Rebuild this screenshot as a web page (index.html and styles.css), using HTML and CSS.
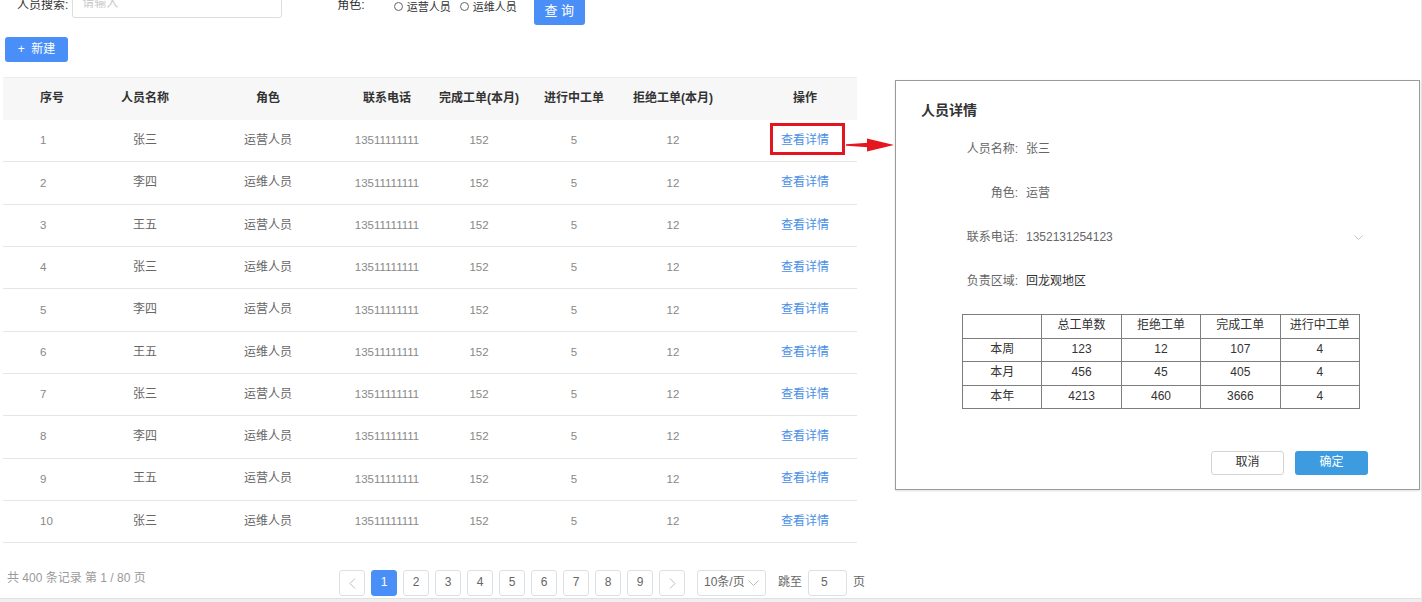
FILE: index.html
```html
<!DOCTYPE html>
<html lang="zh-CN">
<head>
<meta charset="utf-8">
<title>人员管理</title>
<link rel="stylesheet" href="styles.css">
</head>
<body>
<div class="page">
  <div class="search">
    <span class="search-label">人员搜索:</span>
    <div class="search-input">请输入</div>
    <span class="role-label">角色:</span>
    <label class="radio radio-first"><i></i>运营人员</label>
    <label class="radio radio-next"><i></i>运维人员</label>
    <div class="btn-query">查 询</div>
  </div>
  <div class="btn-new">+&nbsp;&nbsp;新建</div>

  <div class="main">
    <div class="left">
      <div class="table">
        <div class="thead">
          <div class="cell c1">序号</div>
          <div class="cell">人员名称</div>
          <div class="cell">角色</div>
          <div class="cell">联系电话</div>
          <div class="cell">完成工单(本月)</div>
          <div class="cell">进行中工单</div>
          <div class="cell">拒绝工单(本月)</div>
          <div class="cell c8">操作</div>
        </div>
        <div class="row"><div class="cell c1 num">1</div><div class="cell">张三</div><div class="cell">运营人员</div><div class="cell num">13511111111</div><div class="cell num">152</div><div class="cell num">5</div><div class="cell num">12</div><div class="cell c8"><a class="link">查看详情</a></div></div>
        <div class="row"><div class="cell c1 num">2</div><div class="cell">李四</div><div class="cell">运维人员</div><div class="cell num">13511111111</div><div class="cell num">152</div><div class="cell num">5</div><div class="cell num">12</div><div class="cell c8"><a class="link">查看详情</a></div></div>
        <div class="row"><div class="cell c1 num">3</div><div class="cell">王五</div><div class="cell">运营人员</div><div class="cell num">13511111111</div><div class="cell num">152</div><div class="cell num">5</div><div class="cell num">12</div><div class="cell c8"><a class="link">查看详情</a></div></div>
        <div class="row"><div class="cell c1 num">4</div><div class="cell">张三</div><div class="cell">运维人员</div><div class="cell num">13511111111</div><div class="cell num">152</div><div class="cell num">5</div><div class="cell num">12</div><div class="cell c8"><a class="link">查看详情</a></div></div>
        <div class="row"><div class="cell c1 num">5</div><div class="cell">李四</div><div class="cell">运营人员</div><div class="cell num">13511111111</div><div class="cell num">152</div><div class="cell num">5</div><div class="cell num">12</div><div class="cell c8"><a class="link">查看详情</a></div></div>
        <div class="row"><div class="cell c1 num">6</div><div class="cell">王五</div><div class="cell">运维人员</div><div class="cell num">13511111111</div><div class="cell num">152</div><div class="cell num">5</div><div class="cell num">12</div><div class="cell c8"><a class="link">查看详情</a></div></div>
        <div class="row"><div class="cell c1 num">7</div><div class="cell">张三</div><div class="cell">运营人员</div><div class="cell num">13511111111</div><div class="cell num">152</div><div class="cell num">5</div><div class="cell num">12</div><div class="cell c8"><a class="link">查看详情</a></div></div>
        <div class="row"><div class="cell c1 num">8</div><div class="cell">李四</div><div class="cell">运维人员</div><div class="cell num">13511111111</div><div class="cell num">152</div><div class="cell num">5</div><div class="cell num">12</div><div class="cell c8"><a class="link">查看详情</a></div></div>
        <div class="row"><div class="cell c1 num">9</div><div class="cell">王五</div><div class="cell">运营人员</div><div class="cell num">13511111111</div><div class="cell num">152</div><div class="cell num">5</div><div class="cell num">12</div><div class="cell c8"><a class="link">查看详情</a></div></div>
        <div class="row"><div class="cell c1 num">10</div><div class="cell">张三</div><div class="cell">运维人员</div><div class="cell num">13511111111</div><div class="cell num">152</div><div class="cell num">5</div><div class="cell num">12</div><div class="cell c8"><a class="link">查看详情</a></div></div>

        <div class="hl"></div>
        <svg class="arrow" width="50" height="16" viewBox="0 0 50 16">
          <polygon points="0,7.2 26,5.6 26,10.4 0,8.8" fill="#e4161f"/>
          <polygon points="21,1.5 48,8 21,14.5" fill="#e4161f"/>
        </svg>
      </div>

      <div class="pagination">
        <div class="total">共 400 条记录 第 1 / 80 页</div>
        <div class="pager">
          <div class="pg"><svg width="7" height="11" viewBox="0 0 7 11"><polyline points="6,0.5 1,5.5 6,10.5" fill="none" stroke="#bbb" stroke-width="1"/></svg></div>
          <div class="pg active">1</div>
          <div class="pg">2</div>
          <div class="pg">3</div>
          <div class="pg">4</div>
          <div class="pg">5</div>
          <div class="pg">6</div>
          <div class="pg">7</div>
          <div class="pg">8</div>
          <div class="pg">9</div>
          <div class="pg"><svg width="7" height="11" viewBox="0 0 7 11"><polyline points="1,0.5 6,5.5 1,10.5" fill="none" stroke="#bbb" stroke-width="1"/></svg></div>
        </div>
        <div class="size-select">10条/页<svg width="11" height="7" viewBox="0 0 11 7"><polyline points="0.5,0.5 5.5,5.5 10.5,0.5" fill="none" stroke="#bbb" stroke-width="1"/></svg></div>
        <span class="jump">跳至</span>
        <div class="jump-input">5</div>
        <span class="jump-page">页</span>
      </div>
    </div>

    <div class="panel">
      <div class="panel-title">人员详情</div>
      <div class="form">
        <div class="frow"><span class="flabel">人员名称:</span><span class="fvalue">张三</span></div>
        <div class="frow"><span class="flabel">角色:</span><span class="fvalue">运营</span></div>
        <div class="frow"><span class="flabel">联系电话:</span><span class="fvalue fselect">1352131254123<svg width="9" height="6" viewBox="0 0 9 6"><polyline points="0.5,0.5 4.5,4.5 8.5,0.5" fill="none" stroke="#c4c4c4" stroke-width="1"/></svg></span></div>
        <div class="frow"><span class="flabel">负责区域:</span><span class="fvalue dark">回龙观地区</span></div>
      </div>
      <table class="stats">
        <tr><td></td><td>总工单数</td><td>拒绝工单</td><td>完成工单</td><td>进行中工单</td></tr>
        <tr><td>本周</td><td>123</td><td>12</td><td>107</td><td>4</td></tr>
        <tr><td>本月</td><td>456</td><td>45</td><td>405</td><td>4</td></tr>
        <tr><td>本年</td><td>4213</td><td>460</td><td>3666</td><td>4</td></tr>
      </table>
      <div class="actions">
        <div class="btn-cancel">取消</div>
        <div class="btn-ok">确定</div>
      </div>
    </div>
  </div>

  <div class="bottom-strip"></div>
</div>
</body>
</html>
```

FILE: styles.css
```css
* { box-sizing: border-box; margin: 0; padding: 0; }
html, body { width: 1422px; height: 602px; overflow: hidden; background: #fff; }
body {
  font-family: "Liberation Sans", "Noto Sans CJK SC", sans-serif;
  font-size: 12px;
  color: #333;
  line-height: 1.3;
}
.page {
  width: 1422px;
  height: 602px;
  border-right: 1px solid #e6e6e6;
  display: flex;
  flex-direction: column;
}

/* search row (partly scrolled off the top) */
.search {
  display: flex;
  align-items: center;
  height: 34px;
  margin-top: -11px;
  padding-left: 17px;
}
.search-label { color: #333; }
.search-input {
  width: 210px;
  height: 28px;
  margin-left: 4px;
  margin-top: -4px;
  border: 1px solid #dcdcdc;
  border-radius: 3px;
  padding-left: 9px;
  display: flex;
  align-items: center;
  color: #c9c9c9;
}
.role-label { margin-left: 55px; color: #333; }
.radio {
  display: flex;
  align-items: center;
  font-size: 11px;
  color: #333;
  margin-top: 2px;
}
.radio-first { margin-left: 29px; }
.radio-next { margin-left: 9px; }
.radio i {
  display: block;
  width: 9px;
  height: 9px;
  border: 1px solid #666;
  border-radius: 50%;
  margin-right: 4px;
}
.btn-query {
  align-self: flex-end;
  margin-bottom: -2px;
  margin-left: 17px;
  width: 51px;
  height: 34px;
  padding-top: 6px;
  display: flex;
  align-items: center;
  justify-content: center;
  background: #4a8ff7;
  color: #fff;
  border-radius: 3px;
  font-size: 13px;
}
.btn-new {
  margin: 14px 0 0 5px;
  width: 63px;
  height: 25px;
  display: flex;
  align-items: center;
  justify-content: center;
  background: #4a8ff7;
  color: #fff;
  border-radius: 3px;
  font-size: 12px;
}

/* main area */
.main {
  display: flex;
  margin-top: 15px;
}
.left {
  width: 866px;
  padding-left: 3px;
  flex-shrink: 0;
}
.table {
  position: relative;
  width: 854px;
}
.thead, .row {
  display: grid;
  grid-template-columns: 80px 124px 122px 116px 68px 122px 76px 146px;
}
.thead {
  height: 43px;
  background: #f7f7f8;
  border-top: 1px solid #ededed;
  font-weight: bold;
  color: #333;
}
.row {
  height: 42.33px;
  border-bottom: 1px solid #e6e6e6;
  color: #666;
}
.cell {
  display: flex;
  align-items: center;
  justify-content: center;
  white-space: nowrap;
}
.cell.c1 { justify-content: flex-start; padding-left: 37px; }
.cell.c8 { padding-left: 42px; }
.cell.num { font-size: 11.5px; color: #888; }
.link { color: #4a8fe6; text-decoration: none; }

.hl {
  position: absolute;
  left: 767px;
  top: 46px;
  width: 75px;
  height: 32px;
  border: 3px solid #e3151f;
}
.arrow {
  position: absolute;
  left: 843px;
  top: 60px;
}

/* pagination */
.pagination {
  display: flex;
  align-items: center;
  margin-top: 27px;
  height: 26px;
}
.total {
  align-self: flex-start;
  width: 336px;
  padding-left: 4px;
  line-height: 16px;
  color: #9a9a9a;
  white-space: nowrap;
}
.pager { display: flex; gap: 6px; }
.pg {
  width: 26px;
  height: 26px;
  border: 1px solid #dcdfe6;
  border-radius: 3px;
  display: flex;
  align-items: center;
  justify-content: center;
  color: #666;
  font-size: 12px;
}
.pg.active { background: #4a8ff7; border-color: #4a8ff7; color: #fff; }
.size-select {
  margin-left: 12px;
  width: 69px;
  height: 26px;
  border: 1px solid #dcdfe6;
  border-radius: 3px;
  padding: 0 6px;
  display: flex;
  align-items: center;
  justify-content: space-between;
  color: #666;
  white-space: nowrap;
}
.jump { margin-left: 12px; color: #666; }
.jump-input {
  margin-left: 6px;
  width: 39px;
  height: 26px;
  border: 1px solid #dcdfe6;
  border-radius: 3px;
  padding-left: 12px;
  display: flex;
  align-items: center;
  color: #666;
}
.jump-page { margin-left: 6px; color: #666; }

/* detail panel */
.panel {
  margin-top: 3px;
  margin-left: 29px;
  width: 525px;
  height: 410px;
  border: 1px solid #9b9b9b;
  box-shadow: 0 1px 2px rgba(0, 0, 0, 0.12);
  padding: 19px 25px 0 25px;
  display: flex;
  flex-direction: column;
  background: #fff;
}
.panel-title {
  font-size: 14px;
  font-weight: bold;
  line-height: 20px;
  color: #333;
}
.form { margin-top: 8px; }
.frow {
  height: 44px;
  display: flex;
  align-items: center;
}
.flabel {
  width: 97px;
  margin-right: 8px;
  text-align: right;
  color: #666;
  white-space: nowrap;
}
.fvalue { color: #666; }
.fvalue.dark { color: #333; }
.fselect {
  width: 337px;
  display: flex;
  align-items: center;
  justify-content: space-between;
}
.stats {
  margin: 10px 0 0 41px;
  width: 398px;
  border-collapse: collapse;
  table-layout: fixed;
}
.stats td {
  height: 23.5px;
  border: 1px solid #7d7d7d;
  text-align: center;
  vertical-align: middle;
  color: #333;
  padding: 0;
  font-size: 12px;
}
.actions {
  display: flex;
  justify-content: flex-end;
  margin-top: 42px;
  padding-right: 26px;
}
.btn-cancel, .btn-ok {
  width: 73px;
  height: 24px;
  border-radius: 3px;
  display: flex;
  align-items: center;
  justify-content: center;
}
.btn-cancel { border: 1px solid #d4d4d4; color: #333; }
.btn-ok { margin-left: 11px; background: #3d9be0; color: #fff; }

.bottom-strip {
  margin-top: auto;
  height: 4px;
  background: #efefef;
  border-top: 1px solid #e2e2e2;
}
```
